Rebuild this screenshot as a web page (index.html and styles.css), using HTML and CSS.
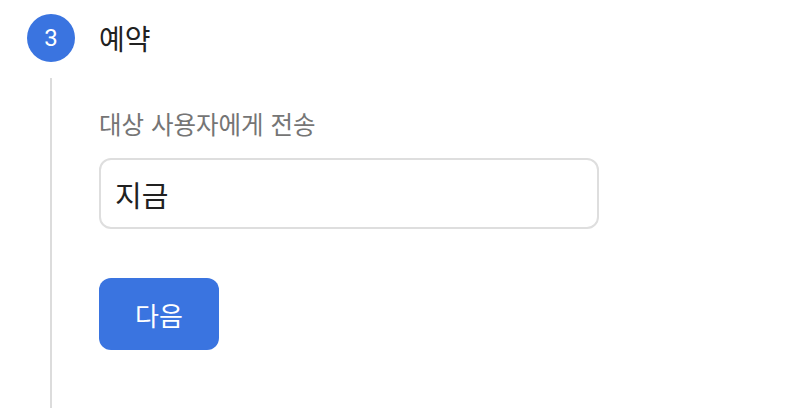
FILE: index.html
```html
<!DOCTYPE html>
<html lang="ko">
  <head>
    <meta charset="utf-8">
    <title>예약</title>
    <link rel="stylesheet" href="styles.css">
  </head>
  <body>
    <section class="step">
      <header class="step-head">
        <span class="step-num">3</span>
        <h2 class="step-title">예약</h2>
      </header>
      <div class="step-body">
        <label class="field-label" for="when">대상 사용자에게 전송</label>
        <div class="select-box" id="when"><span class="select-value">지금</span></div>
        <button class="next-button">다음</button>
      </div>
    </section>
  </body>
</html>
```

FILE: styles.css
```css
body {
  margin: 0;
  background: #fff;
  font-family: "Noto Sans CJK KR", "Noto Sans", sans-serif;
  color: #212121;
  overflow: hidden;
}

.step {
  padding: 14px 0 0 27px;
}

.step-head {
  display: flex;
  align-items: center;
  gap: 24px;
  height: 48px;
}

.step-num {
  width: 48px;
  height: 48px;
  border-radius: 50%;
  background: #3a74e0;
  color: #fff;
  font-family: Roboto, "Noto Sans", sans-serif;
  font-size: 24px;
  display: flex;
  align-items: center;
  justify-content: center;
}

.step-title {
  margin: 0;
  font-size: 28px;
  font-weight: 400;
  color: #212121;
}

.step-body {
  margin: 16px 0 0 23px;
  border-left: 2px solid #dcdcdc;
  padding: 32px 0 60px 47px;
  display: flex;
  flex-direction: column;
  align-items: flex-start;
}

.field-label {
  font-size: 24.5px;
  line-height: 28px;
  color: #757575;
}

.select-box {
  margin-top: 20px;
  box-sizing: border-box;
  width: 500px;
  height: 71px;
  border: 2px solid #dedede;
  border-radius: 12px;
  padding-left: 14px;
  display: flex;
  align-items: center;
}

.select-value {
  font-size: 29px;
  color: #212121;
}

.next-button {
  margin-top: 49px;
  width: 120px;
  height: 72px;
  border: none;
  border-radius: 12px;
  background: #3a74e0;
  color: #fff;
  font-family: "Noto Sans CJK KR", "Noto Sans", sans-serif;
  font-size: 26px;
}
```
